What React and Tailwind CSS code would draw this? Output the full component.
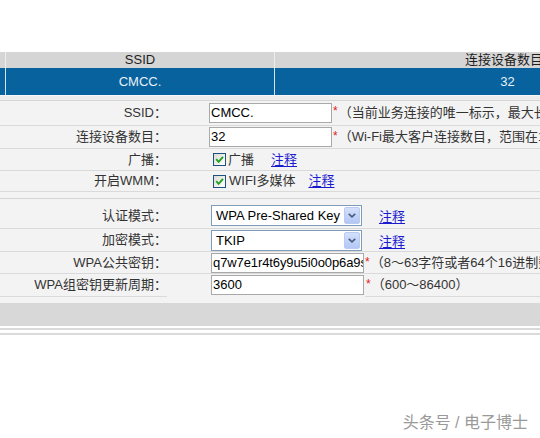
import React from "react";

function Check() {
  return (
    <span className="inline-flex w-[13px] h-[13px] shrink-0 items-center justify-center border border-[#1c5180] bg-gradient-to-br from-[#dcdcd5] to-white">
      <svg viewBox="0 0 9 9" className="w-[9px] h-[9px]">
        <path d="M1.2 4.2 L3.6 6.8 L8 1.8" stroke="#21a121" strokeWidth="1.9" fill="none" />
      </svg>
    </span>
  );
}

function Select({ value }) {
  return (
    <div className="flex w-[151px] h-[21px] shrink-0 border border-[#7f9db9] bg-white">
      <span className="flex-1 pl-[4px] leading-[19px] text-black whitespace-nowrap overflow-hidden">{value}</span>
      <span className="w-[16px] my-[1px] mr-[1px] flex items-center justify-center rounded-[2px] border border-[#b9cbf3] bg-gradient-to-b from-[#d4e0fc] to-[#b3c7f4]">
        <svg viewBox="0 0 8 5" className="w-[8px] h-[5px]">
          <path d="M0.8 0.8 L4 3.8 L7.2 0.8" stroke="#4d6185" strokeWidth="1.8" fill="none" />
        </svg>
      </span>
    </div>
  );
}

function Link() {
  return <a className="text-[#1a1acf] underline underline-offset-2 cursor-pointer">注释</a>;
}

function Star() {
  return <span className="text-[#e02020] text-[12px] ml-[1px] mr-[1px] self-start mt-[1px]">*</span>;
}

function Row({ h, label, children }) {
  return (
    <div className={"flex border-b border-[#dadada] " + h}>
      <div className="w-[167px] shrink-0 flex items-center justify-end whitespace-nowrap text-[#333]">{label}</div>
      <div className="flex-1 flex items-center whitespace-nowrap">{children}</div>
    </div>
  );
}

export default function App() {
  return (
    <div className="relative w-[540px] h-[438px] overflow-hidden bg-white text-[13px] text-[#333] font-['Liberation_Sans','Noto_Sans_CJK_SC',sans-serif]">
      <div className="h-[52px]" />
      <div className="flex h-[16px] bg-[#d5d5d5] leading-[16px] text-[#1e1e1e]">
        <div className="w-[6px] shrink-0 border-r border-[#ededed]" />
        <div className="w-[269px] shrink-0 border-r border-[#ededed] text-center">SSID</div>
        <div className="w-[458px] shrink-0 text-center">连接设备数目</div>
      </div>
      <div className="flex h-[27px] bg-[#07629e] leading-[27px] text-[#eaf1f7]">
        <div className="w-[6px] shrink-0 border-r border-[#d4e3ef]" />
        <div className="w-[269px] shrink-0 border-r border-[#d4e3ef] text-center">CMCC.</div>
        <div className="w-[465px] shrink-0 text-center">32</div>
      </div>
      <div className="h-[6px] bg-[#ececec] border-t border-t-[#f7f7f7] border-b border-b-[#d6d6d6]" />

      <div className="bg-[#f3f3f3]">
        <Row h="h-[25px]" label="SSID：">
          <div className="ml-[42px] w-[123px] h-[20px] shrink-0 border border-[#a9a9a9] bg-white pl-[1px] leading-[18px] text-black">CMCC.</div>
          <Star />
          <span className="text-[#333]">（当前业务连接的唯一标示，最大长度为32个字符）</span>
        </Row>
        <Row h="h-[23px]" label="连接设备数目：">
          <div className="ml-[42px] w-[123px] h-[20px] shrink-0 border border-[#a9a9a9] bg-white pl-[1px] leading-[18px] text-black">32</div>
          <Star />
          <span className="text-[#333]">（Wi-Fi最大客户连接数目，范围在1~32）</span>
        </Row>
        <Row h="h-[22px]" label="广播：">
          <span className="ml-[46px] flex items-center">
            <Check />
            <span className="ml-[2px] text-[#333]">广播</span>
            <span className="ml-[17px]"><Link /></span>
          </span>
        </Row>
        <Row h="h-[21px]" label="开启WMM：">
          <span className="ml-[46px] flex items-center">
            <Check />
            <span className="ml-[3px] text-[#333]">WIFI多媒体</span>
            <span className="ml-[13px]"><Link /></span>
          </span>
        </Row>
        <div className="h-[6px]" />
      </div>

      <div className="bg-[#f3f3f3] border-t border-[#d6d6d6] pt-[4px]">
        <Row h="h-[26px]" label="认证模式：">
          <span className="ml-[44px] flex items-center">
            <Select value="WPA Pre-Shared Key" />
            <span className="ml-[17px] mt-[3px]"><Link /></span>
          </span>
        </Row>
        <Row h="h-[23px]" label="加密模式：">
          <span className="ml-[44px] flex items-center">
            <Select value="TKIP" />
            <span className="ml-[17px] mt-[3px]"><Link /></span>
          </span>
        </Row>
        <Row h="h-[22px]" label="WPA公共密钥：">
          <div className="ml-[44px] w-[153px] h-[20px] shrink-0 overflow-hidden border border-[#a9a9a9] bg-white pl-[1px] leading-[18px] text-black tracking-[-0.1px]">q7w7e1r4t6y9u5i0o0p6a9s</div>
          <Star />
          <span className="text-[#333]">（8～63字符或者64个16进制数）</span>
        </Row>
        <div className="flex h-[23px]">
          <div className="w-[167px] shrink-0 flex items-center justify-end whitespace-nowrap border-b border-[#dadada] text-[#333]">WPA组密钥更新周期：</div>
          <div className="w-[198px] shrink-0 flex items-center pb-[1px]">
            <div className="ml-[44px] w-[153px] h-[20px] shrink-0 border border-[#a9a9a9] bg-white pl-[1px] leading-[18px] text-black">3600</div>
          </div>
          <div className="flex-1 flex items-center whitespace-nowrap border-b border-[#dadada]">
            <Star />
            <span className="text-[#333]">（600～86400）</span>
          </div>
        </div>
        <div className="h-[6px]" />
      </div>
      <div className="h-[23px] bg-[#d8d8d8]" />
      <div className="h-[2px]" />
      <div className="h-[2px] bg-[#dadada]" />
      <div className="h-[3px]" />
      <div className="h-[2px] bg-[#dadada]" />

      <div className="absolute right-[12px] top-[413px] text-[16px] leading-[20px] text-[#9a9a9a] whitespace-nowrap">头条号 / 电子博士</div>
    </div>
  );
}
